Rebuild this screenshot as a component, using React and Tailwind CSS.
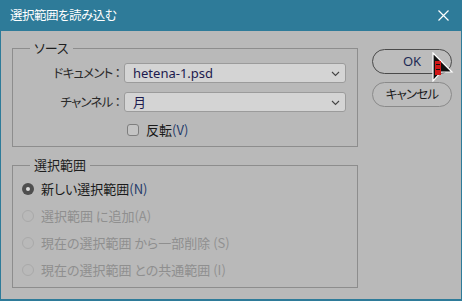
import React from "react";

const jp = "font-['Noto_Sans_CJK_JP',sans-serif] [font-feature-settings:'palt']";

/**
 * GroupBox
 * Windows style fieldset with a caption cut into the top border
 */
function GroupBox({ title, className, children }) {
  return (
    <fieldset className={`border border-[#8d8d8d] ${className}`}>
      <legend className="ml-[17px] px-[4px] text-[13px] leading-[18px] text-[#1e1e1e]">{title}</legend>
      {children}
    </fieldset>
  );
}

function Select({ value }) {
  return (
    <div className="flex h-[20px] w-[222px] items-center justify-between rounded-[3px] border border-[#9b9b9b] bg-[#d4d4d4] pl-[8px] pr-[5px]">
      <span className="font-['Noto_Sans','Noto_Sans_CJK_JP',sans-serif] text-[13px] leading-none text-[#1d1a4e]">{value}</span>
      <svg width="9" height="6" viewBox="0 0 9 6" className="mt-[1px]">
        <path d="M1 1 L4.5 4.5 L8 1" fill="none" stroke="#444" strokeWidth="1.1" />
      </svg>
    </div>
  );
}

function Radio({ label, hotkey, checked, disabled }) {
  return (
    <div className="flex h-[27px] items-center">
      {checked ? (
        <span className="flex h-[12px] w-[12px] items-center justify-center rounded-full bg-[#4f4f4f]">
          <span className="h-[4px] w-[4px] rounded-full bg-[#dcdcdc]" />
        </span>
      ) : (
        <span className="h-[12px] w-[12px] rounded-full border border-[#a9a9a9]" />
      )}
      <span className={`ml-[7px] text-[13px] leading-none ${disabled ? "text-[#8f8f8f]" : "text-[#1a1a1a]"}`}>
        {label}
        <span className={disabled ? "text-[#919191]" : "text-[#243a6a]"}>{hotkey}</span>
      </span>
    </div>
  );
}

export default function App() {
  return (
    <div className={`relative flex h-[301px] w-[462px] flex-col border-x border-b-2 border-[#2e7b99] bg-[#b9b9b9] ${jp}`}>
      {/* Title bar */}
      <div className="-mx-px flex h-[31px] items-center justify-between bg-[#2e7b99] pl-[10px] pr-[13px]">
        <span className="text-[12.5px] tracking-[-0.5px] text-white">選択範囲を読み込む</span>
        <svg width="11" height="11" viewBox="0 0 11 11">
          <path d="M0.5 0.5 L10.5 10.5 M10.5 0.5 L0.5 10.5" stroke="#fff" strokeWidth="1.2" />
        </svg>
      </div>

      {/* Body */}
      <div className="flex pl-[11px] pt-[8px]">
        <div className="flex w-[346px] flex-col">
          <GroupBox title="ソース" className="h-[108px]">
            <div className="flex flex-col gap-[9px] pt-[6px]">
              <div className="flex items-center">
                <span className="w-[111px] pr-[4px] text-right text-[12.5px] tracking-[-0.8px] text-[#2a2a2a]">ドキュメント ：</span>
                <Select value="hetena-1.psd" />
              </div>
              <div className="flex items-center">
                <span className="w-[111px] pr-[4px] text-right text-[12.5px] tracking-[-0.8px] text-[#2a2a2a]">チャンネル ：</span>
                <Select value="月" />
              </div>
              <div className="ml-[114px] mt-[2px] flex items-center">
                <span className="h-[12px] w-[12px] rounded-[3px] border border-[#7e7e7e] bg-[#c4c4c4]" />
                <span className="ml-[7px] text-[13px] leading-none text-[#1a1a1a]">
                  反転<span className="text-[#243a6a]">(V)</span>
                </span>
              </div>
            </div>
          </GroupBox>

          <GroupBox title="選択範囲" className="mt-[9px] h-[132px]">
            <div className="flex flex-col pl-[9px] pt-[1px]">
              <Radio label="新しい選択範囲" hotkey="(N)" checked />
              <Radio label="選択範囲 に追加" hotkey="(A)" disabled />
              <Radio label="現在の選択範囲 から一部削除 " hotkey="(S)" disabled />
              <Radio label="現在の選択範囲 との共通範囲 " hotkey="(I)" disabled />
            </div>
          </GroupBox>
        </div>

        {/* Buttons */}
        <div className="ml-[14px] flex w-[80px] flex-col gap-[8px] pt-[10px]">
          <button className="flex h-[25px] items-center justify-center rounded-full border border-[#4a4a4a] bg-[#bcbcbc] font-['Noto_Sans',sans-serif] text-[13px] text-[#1d2a55]">
            OK
          </button>
          <button className="flex h-[25px] items-center justify-center rounded-full border border-[#8a8a8a] bg-[#bcbcbc] text-[12.5px] tracking-[-0.8px] text-[#1a1a1a]">
            キャンセル
          </button>
        </div>
      </div>

      {/* Mouse cursor overlay */}
      <svg className="absolute left-[431px] top-[52px]" width="22" height="30" viewBox="0 0 22 30">
        <path d="M1 1 L20 20 L9 20 L1 29 Z" fill="#111" stroke="#fff" strokeWidth="1.2" />
        <rect x="3" y="9" width="6" height="14" fill="#d01818" />
        <rect x="4" y="12" width="4" height="1" fill="#111" />
        <rect x="4" y="17" width="4" height="1" fill="#111" />
      </svg>
    </div>
  );
}
